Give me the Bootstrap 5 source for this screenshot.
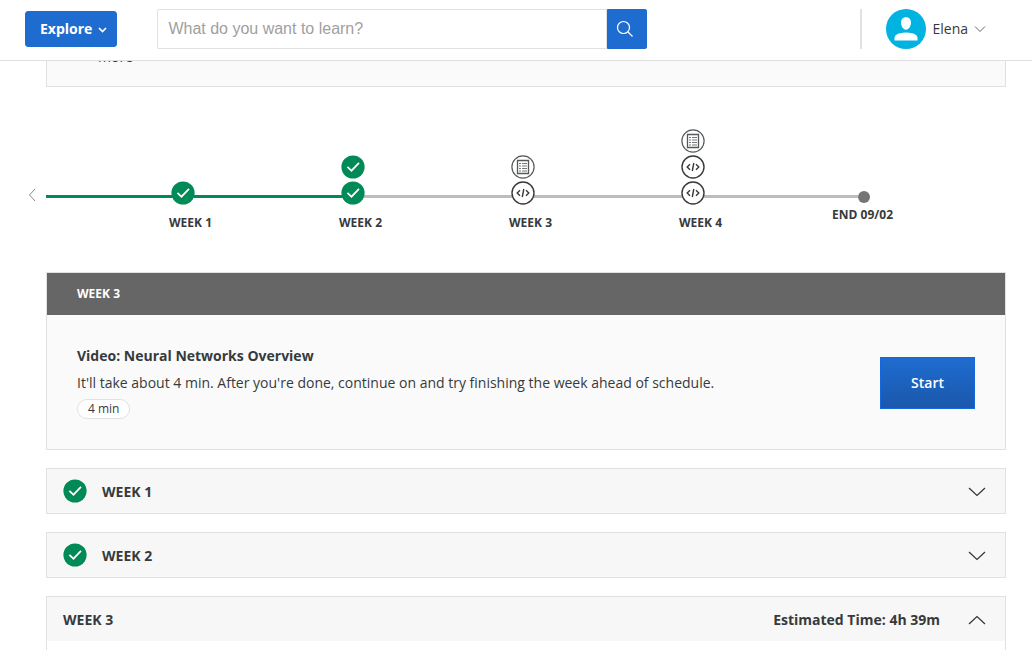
<!DOCTYPE html>
<html lang="en">
<head>
<meta charset="utf-8">
<meta name="viewport" content="width=device-width, initial-scale=1">
<title>Course home</title>
<link rel="stylesheet" href="https://cdn.jsdelivr.net/npm/bootstrap@5.3.0/dist/css/bootstrap.min.css">
<style>
  :root { --blue: #1f6cd1; --green: #008a57; --ink: #373a3c; --rule: #e1e1e1; }
  html { scrollbar-width: none; }
  html::-webkit-scrollbar { display: none; }
  body { font-family: "Open Sans", sans-serif; font-size: 14px; line-height: 20px; color: var(--ink); background: #fff; }

  .site-header { padding: 9px 46px 11px 25px; border-bottom: 1px solid #dfdfdf; }
  .explore-btn { --bs-btn-bg: var(--blue); --bs-btn-border-color: var(--blue); --bs-btn-border-radius: 3px; font-size: 14px; line-height: 20px; padding: 7px 8px 7px 14px; }
  .search-form { flex: 0 1 490px; margin-left: 40px; }
  .search-form .form-control { height: 40px; border-color: var(--rule); border-radius: 2px 0 0 2px; padding: 5px 10px; font-family: "Liberation Sans", sans-serif; font-size: 16px; }
  .search-form .form-control::placeholder { color: #a0a0a0; }
  .search-btn { --bs-btn-bg: var(--blue); --bs-btn-border-color: var(--blue); width: 40px; border-radius: 0 2px 2px 0; padding: 0 4px 0 0; }
  .account { border-left: 2px solid var(--rule); padding-left: 24px; }
  .account-link { color: var(--ink); gap: 6px; }

  .course-main { padding: 0 26px 0 46px; }
  .notice-box { background: #fafafa; border: 1px solid var(--rule); margin-top: -15px; padding: 0 31px 19px; }

  .timeline { margin: 42px 0 0 -18px; }
  .timeline-prev { border: 0; background: none; padding: 0; width: 18px; line-height: 0; text-align: left; margin-bottom: 30px; }
  .step { flex: 0 0 170px; font-size: 12px; line-height: 18px; }
  .step-icons { gap: 2px; padding-right: 21px; background: linear-gradient(#bdbdbd, #bdbdbd) no-repeat 0 calc(100% - 7px) / 100% 3px; }
  .step-done .step-icons { background-image: linear-gradient(var(--green), var(--green)); }
  .step-current .step-icons { background-image: linear-gradient(to left, #bdbdbd 33px, var(--green) 33px); }
  .step-label { margin-top: 9px; padding-right: 4px; }
  .end-track { padding-right: 26px; }
  .end-line { height: 3px; margin-top: 4px; background: #bdbdbd; }
  .end-dot { width: 12px; height: 12px; background: #757575; }
  .end-label { margin: 3px 0 8px; padding-right: 3px; }

  .next-card { margin-top: 40px; border: 1px solid var(--rule); border-radius: 0; background: #fafafa; color: var(--ink); }
  .next-head { background: #666; color: #fff; font-size: 12px; line-height: 18px; padding: 12px 30px; }
  .next-body { padding: 31px 30px 30px; }
  .next-title { font-size: 14px; line-height: 20px; }
  .next-body p { margin: 7px 0 6px; }
  .time-pill { width: fit-content; border: 1px solid var(--rule); background: #fff; font-size: 12px; line-height: 18px; padding: 0 10px; }
  .start-btn { --bs-btn-border-color: #1467dc; --bs-btn-border-radius: 0; background: linear-gradient(#1f6cd1, #1a58ab); font-size: 14px; line-height: 20px; padding: 15px 30px; }

  .week-box { margin-top: 18px; border: 1px solid var(--rule); background: #fff; }
  .week-toggle { border: 0; background: #f7f7f7; color: var(--ink); font-size: 14px; line-height: 20px; padding: 2px 19px 0 16px; height: 44px; }
  .week-check { margin: 0 15px 2px 0; }
</style>
</head>
<body>
<svg class="d-none" aria-hidden="true">
  <symbol id="i-check" viewBox="0 0 24 24"><circle cx="12" cy="12" r="11.6" fill="#008a57"/><path d="M6.400 11.800l4.100 3.900 7.500-7.800" fill="none" stroke="#fff" stroke-width="1.700"/></symbol>
  <symbol id="i-code" viewBox="0 0 24 24"><circle cx="12" cy="12" r="11" fill="#fff" stroke="#373a3c" stroke-width="1.4"/><path d="M9 9.300L6.200 12 9 14.700M15 9.300l2.800 2.700-2.800 2.700M12.800 8l-1.500 8" fill="none" stroke="#373a3c" stroke-width="1.400"/></symbol>
  <symbol id="i-quiz" viewBox="0 0 24 24"><circle cx="12" cy="12" r="11.1" fill="#fff" stroke="#55585a" stroke-width="1.2"/><path d="M6.500 5.500h11v13h-11z" fill="none" stroke="#55585a" stroke-width="1.300"/><path d="M8 8.500h2M8 11h2M8 13.500h2M8 16h2M11 8.500h5M11 11h5M11 13.500h5M11 16h5" stroke="#777" stroke-width="1.200"/></symbol>
  <symbol id="i-down" viewBox="0 0 18 10"><path d="M1 1l8 7.500L17 1" fill="none" stroke="#333" stroke-width="1.200"/></symbol>
  <symbol id="i-up" viewBox="0 0 18 10"><path d="M1 9l8-7.500L17 9" fill="none" stroke="#333" stroke-width="1.200"/></symbol>
</svg>

<header class="site-header sticky-top bg-white d-flex align-items-center">
  <button type="button" class="explore-btn btn btn-primary fw-bold d-flex align-items-center gap-1">Explore
    <svg width="12" height="10" viewBox="0 0 12 10" aria-hidden="true"><path d="M3 4l3.500 3.500L10 4" fill="none" stroke="#fff" stroke-width="1.700"/></svg>
  </button>
  <form class="search-form d-flex" role="search">
    <input type="search" class="form-control" placeholder="What do you want to learn?" aria-label="What do you want to learn?">
    <button type="submit" class="search-btn btn btn-primary flex-shrink-0 d-flex align-items-center justify-content-center" aria-label="Search">
      <svg width="18" height="18" viewBox="0 0 18 18" aria-hidden="true"><circle cx="7.500" cy="7.500" r="6" fill="none" stroke="#fff" stroke-width="1.200"/><path d="M12 12l4.500 4.500" stroke="#fff" stroke-width="1.200"/></svg>
    </button>
  </form>
  <div class="account ms-auto">
    <a href="#" class="account-link d-flex align-items-center text-decoration-none">
      <svg width="40" height="40" viewBox="0 0 40 40" aria-hidden="true"><circle cx="20" cy="20" r="20" fill="#00b3e0"/><path d="M20 8.300c3.200 0 5 2.200 5 5.300 0 3.500-2.100 7.200-5 7.200s-5-3.700-5-7.200c0-3.100 1.800-5.300 5-5.300z" fill="#fff"/><path d="M8.500 31.500v-2.200c0-3 2.200-4.300 5.500-5.100 3.500-.8 8.500-.8 12 0 3.300.8 5.500 2.100 5.500 5.100v2.200z" fill="#fff"/></svg>
      <span>Elena</span>
      <svg width="12" height="8" viewBox="0 0 12 8" aria-hidden="true"><path d="M1 1.500l5 5 5-5" fill="none" stroke="#666" stroke-width="1"/></svg>
    </a>
  </div>
</header>

<main class="course-main">
  <section class="notice-box"><div class="ps-3 ms-1">more</div></section>

  <nav class="timeline d-flex align-items-end" aria-label="Course timeline">
    <button type="button" class="timeline-prev flex-shrink-0" aria-label="Earlier weeks">
      <svg width="8" height="14" viewBox="0 0 8 14" aria-hidden="true"><path d="M7 1L1.500 7 7 13" fill="none" stroke="#888"/></svg>
    </button>
    <ol class="list-unstyled d-flex align-items-end mb-0 fw-bold text-end">
      <li class="step step-done"><div class="step-icons d-flex flex-column align-items-end"><svg width="24" height="24"><use href="#i-check"/></svg></div><div class="step-label">WEEK 1</div></li>
      <li class="step step-current"><div class="step-icons d-flex flex-column align-items-end"><svg width="24" height="24"><use href="#i-check"/></svg><svg width="24" height="24"><use href="#i-check"/></svg></div><div class="step-label">WEEK 2</div></li>
      <li class="step"><div class="step-icons d-flex flex-column align-items-end"><svg width="24" height="24"><use href="#i-quiz"/></svg><svg width="24" height="24"><use href="#i-code"/></svg></div><div class="step-label">WEEK 3</div></li>
      <li class="step"><div class="step-icons d-flex flex-column align-items-end"><svg width="24" height="24"><use href="#i-quiz"/></svg><svg width="24" height="24"><use href="#i-code"/></svg><svg width="24" height="24"><use href="#i-code"/></svg></div><div class="step-label">WEEK 4</div></li>
      <li class="step"><div class="end-track d-flex align-items-start"><span class="end-line flex-grow-1"></span><span class="end-dot rounded-circle"></span></div><div class="end-label">END 09/02</div></li>
    </ol>
  </nav>

  <section class="next-card card">
    <h2 class="next-head fw-bold mb-0">WEEK 3</h2>
    <div class="next-body d-flex align-items-center justify-content-between">
      <div>
        <h3 class="next-title fw-bold mb-0">Video: Neural Networks Overview</h3>
        <p>It'll take about 4 min. After you're done, continue on and try finishing the week ahead of schedule.</p>
        <div class="time-pill rounded-pill">4 min</div>
      </div>
      <button type="button" class="start-btn btn btn-primary fw-semibold">Start</button>
    </div>
  </section>

  <section class="week-box">
    <button type="button" class="week-toggle w-100 d-flex align-items-center fw-bold" aria-expanded="false"><svg class="week-check" width="24" height="24" aria-hidden="true"><use href="#i-check"/></svg>WEEK 1<svg class="ms-auto" width="18" height="10" aria-hidden="true"><use href="#i-down"/></svg></button>
  </section>
  <section class="week-box">
    <button type="button" class="week-toggle w-100 d-flex align-items-center fw-bold" aria-expanded="false"><svg class="week-check" width="24" height="24" aria-hidden="true"><use href="#i-check"/></svg>WEEK 2<svg class="ms-auto" width="18" height="10" aria-hidden="true"><use href="#i-down"/></svg></button>
  </section>
  <section class="week-box pb-3">
    <button type="button" class="week-toggle w-100 d-flex align-items-center fw-bold" aria-expanded="true">WEEK 3<span class="ms-auto me-4">Estimated Time: 4h 39m</span><svg class="ms-1" width="18" height="10" aria-hidden="true"><use href="#i-up"/></svg></button>
  </section>
</main>
<script src="https://cdn.jsdelivr.net/npm/bootstrap@5.3.0/dist/js/bootstrap.bundle.min.js"></script>
</body>
</html>
